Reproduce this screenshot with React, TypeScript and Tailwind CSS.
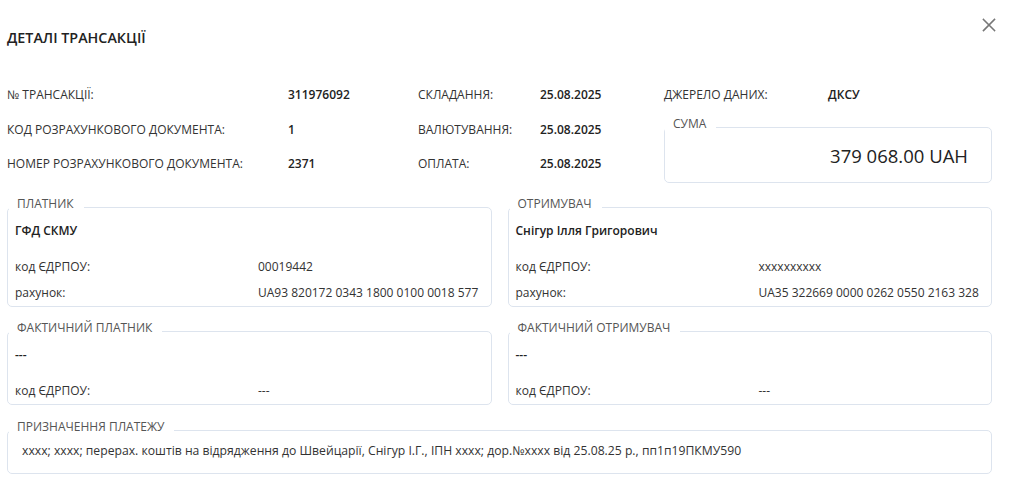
import React from 'react';

type Row = { label: string; value: string };

function Box({
  title,
  name,
  rows,
}: {
  title: string;
  name: string;
  rows: Row[];
}) {
  return (
    <fieldset className="border border-[#dde4ee] rounded-[5px] px-[7px] pt-[5px] pb-[5px] min-w-0">
      <legend className="-ml-[6px] pl-2 pr-2.5 pb-1.5 text-[12px] leading-[16px] text-[#555]">{title}</legend>
      <div className="text-[12px] leading-[16px] font-semibold text-[#222]">{name}</div>
      <div className="mt-[20px] grid grid-cols-[243px_1fr] gap-y-[10px] text-[12px] leading-[16px] text-[#333]">
        {rows.map((r) => (
          <React.Fragment key={r.label}>
            <span>{r.label}</span>
            <span>{r.value}</span>
          </React.Fragment>
        ))}
      </div>
    </fieldset>
  );
}

export default function App() {
  return (
    <div className="relative w-[1013px] min-h-[497px] bg-white pl-[7px] pr-[21px] pt-[28px] font-['Open_Sans',sans-serif] text-[#333]">
      {/* Close button */}
      <button className="absolute right-[17px] top-[18px] w-[14px] h-[14px] flex items-center justify-center">
        <svg width="14" height="14" viewBox="0 0 14 14" fill="none" stroke="#777" strokeWidth="1.6" strokeLinecap="square">
          <path d="M1.5 1.5 L12.5 12.5 M12.5 1.5 L1.5 12.5" />
        </svg>
      </button>

      <h2 className="h-[20px] leading-[20px] text-[14.3px] font-semibold text-[#222]">ДЕТАЛІ ТРАНСАКЦІЇ</h2>

      {/* Header info */}
      <div className="mt-[30px] flex text-[12px] leading-[16px]">
        <div className="grid grid-cols-[281px_130px_122px_124px] auto-rows-[34.5px] items-center">
          <span>№ ТРАНСАКЦІЇ:</span>
          <span className="font-semibold text-[#222]">311976092</span>
          <span>СКЛАДАННЯ:</span>
          <span className="font-semibold text-[#222]">25.08.2025</span>

          <span>КОД РОЗРАХУНКОВОГО ДОКУМЕНТА:</span>
          <span className="font-semibold text-[#222]">1</span>
          <span>ВАЛЮТУВАННЯ:</span>
          <span className="font-semibold text-[#222]">25.08.2025</span>

          <span>НОМЕР РОЗРАХУНКОВОГО ДОКУМЕНТА:</span>
          <span className="font-semibold text-[#222]">2371</span>
          <span>ОПЛАТА:</span>
          <span className="font-semibold text-[#222]">25.08.2025</span>
        </div>
        <div className="flex-1 flex flex-col">
          <div className="h-[34.5px] flex items-center">
            <span className="w-[164px]">ДЖЕРЕЛО ДАНИХ:</span>
            <span className="font-semibold text-[#222]">ДКСУ</span>
          </div>
          <fieldset className="mt-[3.5px] border border-[#dde4ee] rounded-[5px] pl-[7px] pr-[23px] pt-[6px] pb-[14px]">
            <legend className="-ml-[7px] pl-2 pr-2.5 pb-1.5 text-[12px] leading-[16px] text-[#555]">СУМА</legend>
            <div className="text-right text-[18.5px] leading-[24px] font-medium text-[#222]">379 068.00 UAH</div>
          </fieldset>
        </div>
      </div>

      {/* Parties */}
      <div className="mt-[13px] grid grid-cols-2 gap-x-[16px]">
        <Box
          title="ПЛАТНИК"
          name="ГФД СКМУ"
          rows={[
            { label: 'код ЄДРПОУ:', value: '00019442' },
            { label: 'рахунок:', value: 'UA93 820172 0343 1800 0100 0018 577' },
          ]}
        />
        <Box
          title="ОТРИМУВАЧ"
          name="Снігур Ілля Григорович"
          rows={[
            { label: 'код ЄДРПОУ:', value: 'xxxxxxxxxx' },
            { label: 'рахунок:', value: 'UA35 322669 0000 0262 0550 2163 328' },
          ]}
        />
      </div>

      <div className="mt-[13px] grid grid-cols-2 gap-x-[16px]">
        <Box title="ФАКТИЧНИЙ ПЛАТНИК" name="---" rows={[{ label: 'код ЄДРПОУ:', value: '---' }]} />
        <Box title="ФАКТИЧНИЙ ОТРИМУВАЧ" name="---" rows={[{ label: 'код ЄДРПОУ:', value: '---' }]} />
      </div>

      {/* Purpose */}
      <fieldset className="mt-[14px] border border-[#dde4ee] rounded-[5px] pl-[14px] pr-[7px] pt-[2px] pb-[14px]">
        <legend className="-ml-[13px] pl-2 pr-2.5 pb-1.5 text-[12px] leading-[16px] text-[#555]">ПРИЗНАЧЕННЯ ПЛАТЕЖУ</legend>
        <div className="text-[12.2px] leading-[16px] text-[#333]">
          xxxx; xxxx; перерах. коштів на відрядження до Швейцарії, Снігур І.Г., ІПН xxxx; дор.№xxxx від 25.08.25 р., пп1п19ПКМУ590
        </div>
      </fieldset>
    </div>
  );
}
